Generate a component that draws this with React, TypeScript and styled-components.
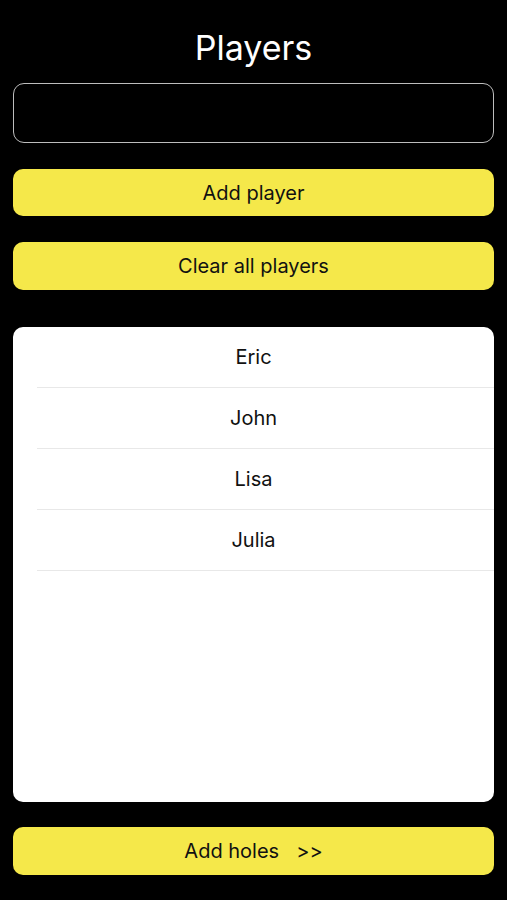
import styled, { createGlobalStyle } from 'styled-components';

const GlobalStyle = createGlobalStyle`
  html, body {
    margin: 0;
    padding: 0;
    background: #000;
  }
  body {
    font-family: Inter, "Noto Sans", sans-serif;
  }
`;

const Page = styled.div`
  display: flex;
  flex-direction: column;
  box-sizing: border-box;
  height: 900px;
  padding: 28px 13px 0;
  background: #000;
`;

const Title = styled.h1`
  margin: 0 0 15px;
  font-size: 34px;
  line-height: 40px;
  font-weight: 400;
  color: #fff;
  text-align: center;
`;

const NameInput = styled.input`
  box-sizing: border-box;
  width: 100%;
  height: 60px;
  margin: 0 0 26px;
  padding: 0 14px;
  background: #000;
  border: 1.5px solid #bdbdbd;
  border-radius: 11px;
  color: #fff;
  font-size: 20px;
  font-family: inherit;
  outline: none;
`;

const Button = styled.button<{ $gap?: number; $height?: number }>`
  box-sizing: border-box;
  width: 100%;
  height: ${(p) => p.$height ?? 48}px;
  margin: 0 0 ${(p) => p.$gap ?? 0}px;
  border: none;
  border-radius: 10px;
  background: #f5e84a;
  color: #111;
  font-family: inherit;
  font-size: 20px;
  cursor: pointer;
`;

const Arrow = styled.span`
  margin-left: 17px;
`;

const List = styled.ul`
  box-sizing: border-box;
  height: 475px;
  margin: 0 0 25px;
  padding: 0;
  list-style: none;
  background: #fff;
  border-radius: 10px;
  overflow: hidden;
`;

const Row = styled.li`
  box-sizing: border-box;
  display: flex;
  align-items: center;
  justify-content: center;
  height: 61px;
  margin-left: 24px;
  padding-right: 24px;
  border-bottom: 1px solid #e8e8e8;
  color: #111;
  font-size: 20px;
`;

const players = ['Eric', 'John', 'Lisa', 'Julia'];

const App = () => {
  return (
    <>
      <GlobalStyle />
      <Page>
        <Title>Players</Title>
        <NameInput type="text" />
        <Button $gap={26} $height={47}>Add player</Button>
        <Button $gap={37}>Clear all players</Button>
        <List>
          {players.map((name) => (
            <Row key={name}>{name}</Row>
          ))}
        </List>
        <Button>
          Add holes<Arrow>&gt;&gt;</Arrow>
        </Button>
      </Page>
    </>
  );
};

export default App;
